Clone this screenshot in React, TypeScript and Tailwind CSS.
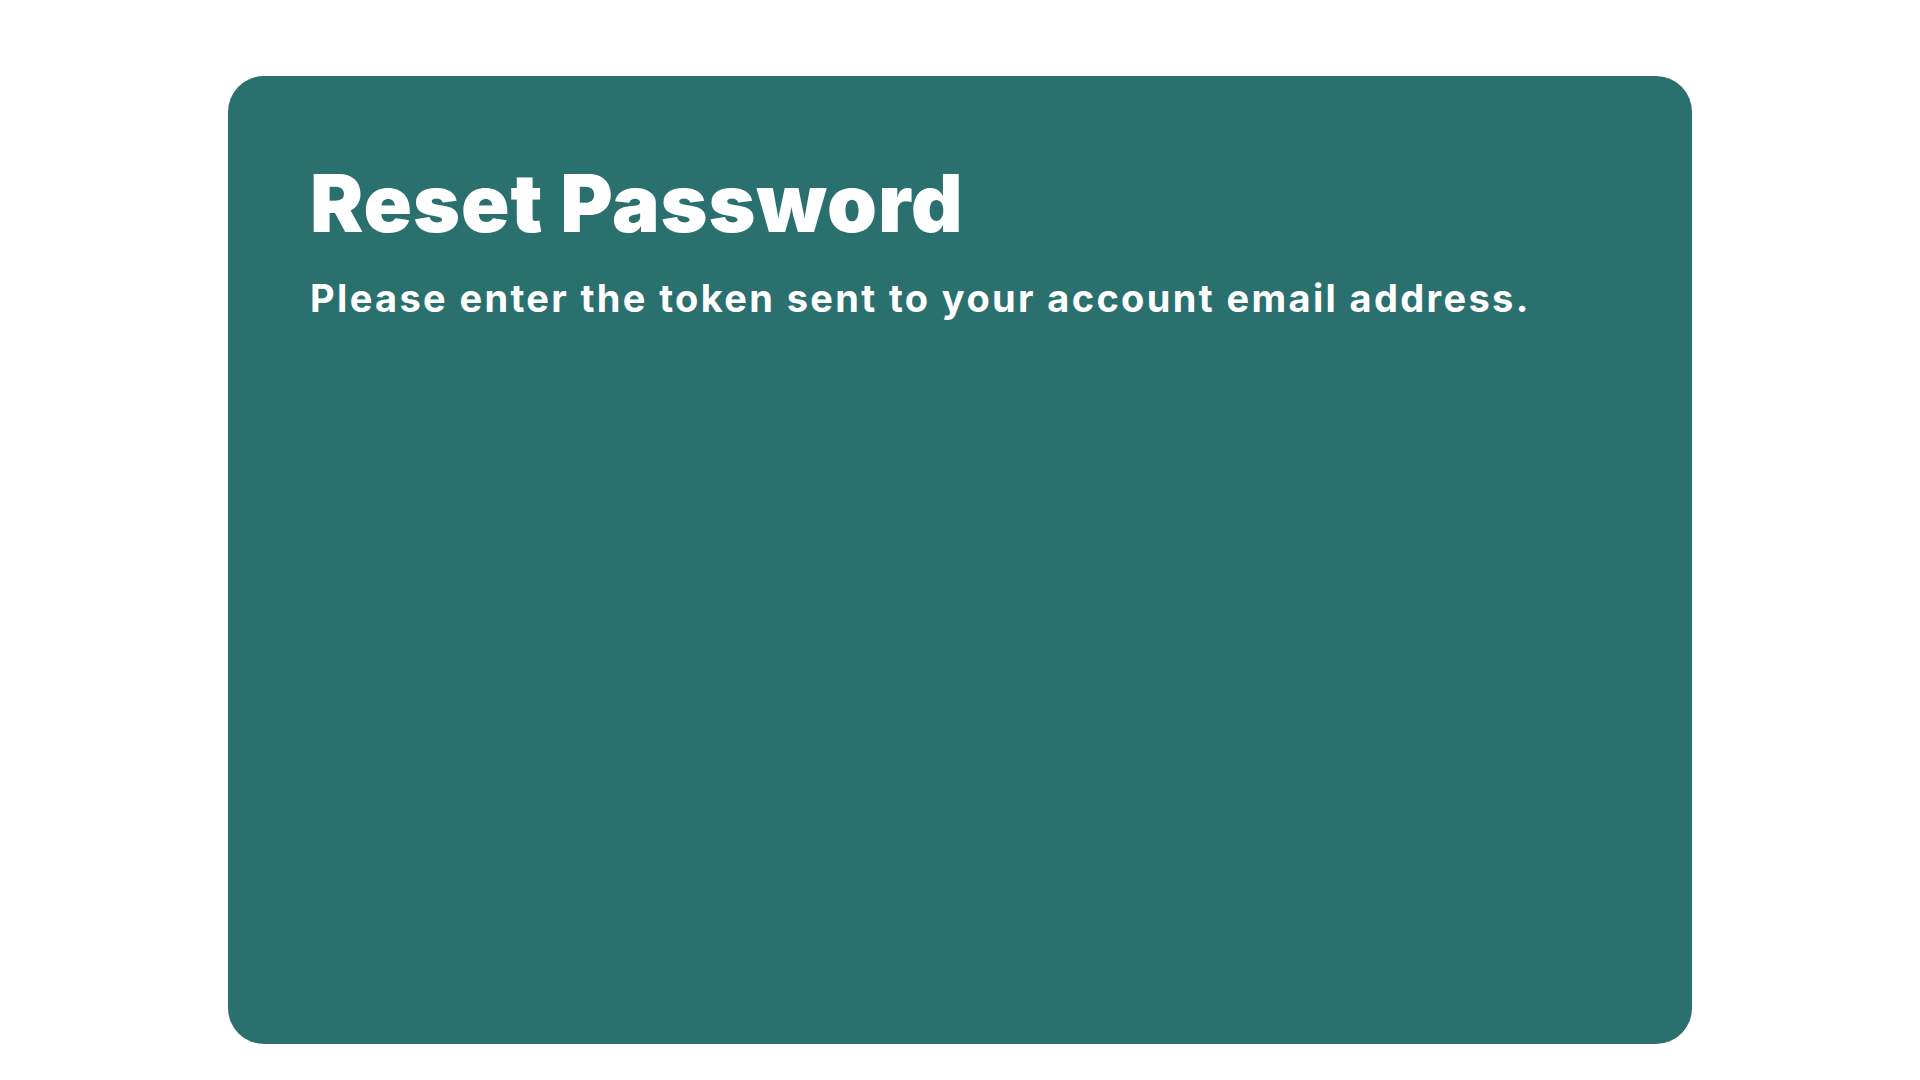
export default function App() {
  return (
    <div className="min-h-screen w-full bg-white pt-[76px] pb-[36px]" style={{ fontFamily: 'Inter, "Noto Sans", sans-serif' }}>
      <div className="mx-auto h-[968px] w-[1464px] rounded-[36px] bg-[#2a706f] pl-[82px] pt-[87px]">
        <h1 className="text-[80px] font-black leading-none tracking-[0.012em] text-white">Reset Password</h1>
        <p className="mt-[36px] text-[38px] font-bold leading-none tracking-[0.062em] text-white">
          Please enter the token sent to your account email address.
        </p>
      </div>
    </div>
  );
}
